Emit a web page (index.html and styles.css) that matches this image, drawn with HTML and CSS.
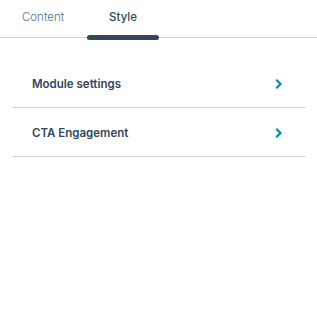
FILE: index.html
```html
<!DOCTYPE html>
<html lang="en">
<head>
    <meta charset="UTF-8">
    <meta name="viewport" content="width=device-width, initial-scale=1.0">
    <title>Style settings</title>
    <link rel="stylesheet" href="styles.css">
</head>
<body>
    <div class="panel">
        <div class="tabs">
            <div class="tab">Content</div>
            <div class="tab active">Style</div>
        </div>
        <div class="sections">
            <div class="section-row">
                <span class="section-title">Module settings</span>
                <svg class="chevron" width="8" height="10" viewBox="0 0 8 10">
                    <path d="M2 1.5 L5.5 5 L2 8.5" fill="none" stroke="#0091ae" stroke-width="2.2" stroke-linecap="square" stroke-linejoin="miter"/>
                </svg>
            </div>
            <div class="section-row">
                <span class="section-title">CTA Engagement</span>
                <svg class="chevron" width="8" height="10" viewBox="0 0 8 10">
                    <path d="M2 1.5 L5.5 5 L2 8.5" fill="none" stroke="#0091ae" stroke-width="2.2" stroke-linecap="square" stroke-linejoin="miter"/>
                </svg>
            </div>
        </div>
    </div>
</body>
</html>
```

FILE: styles.css
```css
* {
    margin: 0;
    padding: 0;
    box-sizing: border-box;
}

body {
    font-family: 'Inter', sans-serif;
    background-color: white;
    color: #33475b;
}

.tabs {
    display: flex;
    height: 38px;
    border-bottom: 1px solid #cbd6e2;
    padding-left: 7px;
    gap: 8px;
}

.tab {
    width: 72px;
    text-align: center;
    font-size: 11.5px;
    font-weight: 300;
    line-height: 34px;
    color: #516f90;
    position: relative;
}

.tab.active {
    color: #33475b;
    font-weight: 500;
}

.tab.active::after {
    content: '';
    position: absolute;
    left: 0;
    right: 0;
    bottom: -3px;
    height: 5px;
    border-radius: 3px;
    background-color: #33475b;
}

.sections {
    padding: 21px 11px 0 13px;
}

.section-row {
    display: flex;
    align-items: center;
    justify-content: space-between;
    height: 49px;
    border-bottom: 1px solid #cbd6e2;
    padding: 1px 23px 0 19px;
}

.section-title {
    font-size: 11.5px;
    font-weight: 600;
}

.chevron {
    display: block;
}
```
